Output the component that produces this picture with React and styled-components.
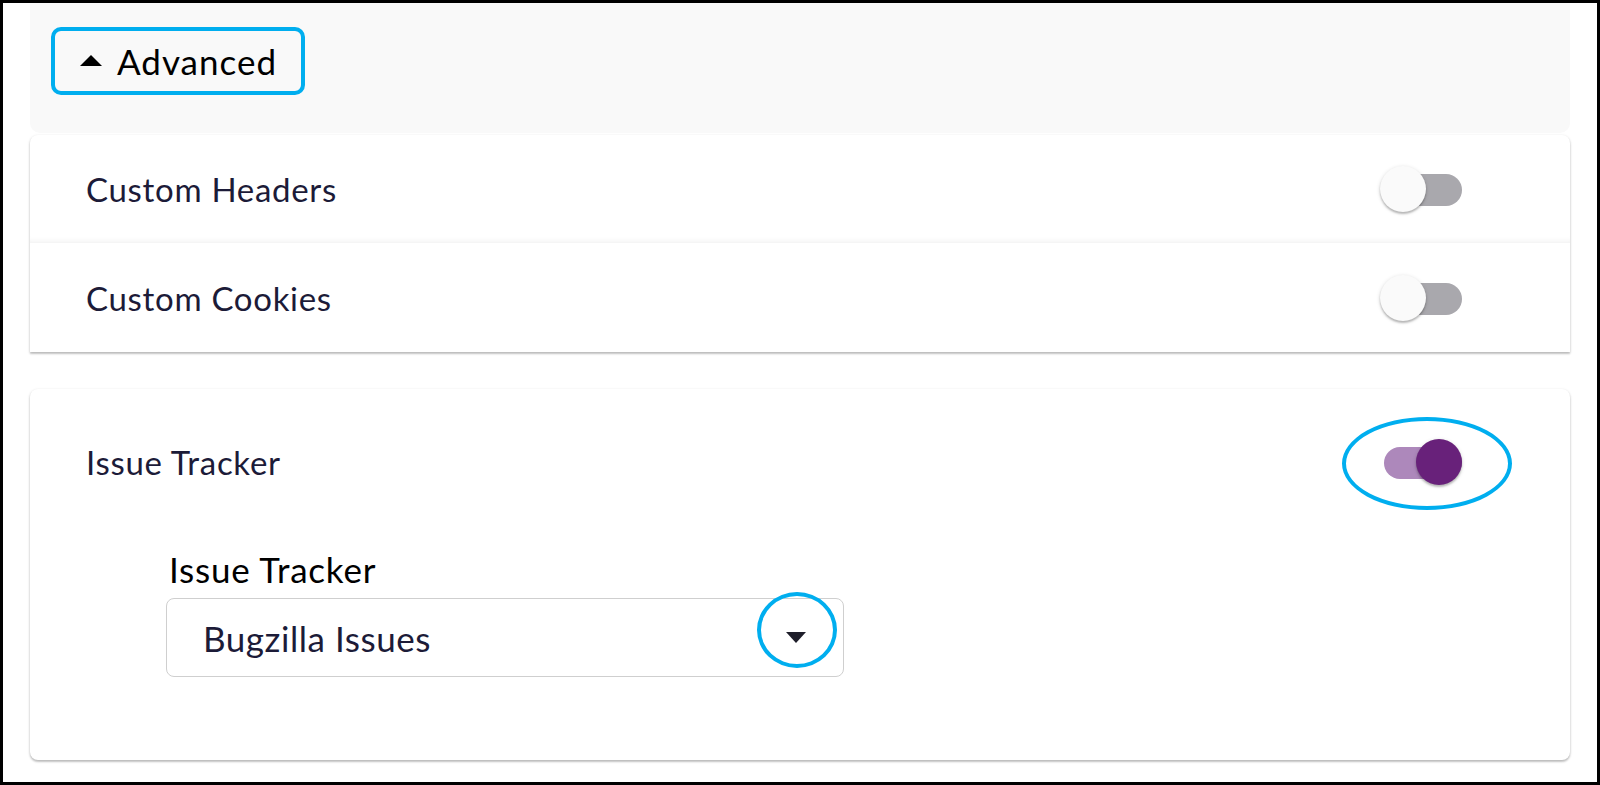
import React from 'react';
import styled, { createGlobalStyle } from 'styled-components';

const GlobalStyle = createGlobalStyle`
    body {
        margin: 0;
        background: #ffffff;
        font-family: Lato, "Noto Sans", sans-serif;
    }
`;

const Frame = styled.div`
    width: 1600px;
    height: 785px;
    box-sizing: border-box;
    border: 3px solid #000;
    background: #fff;
    overflow: hidden;
`;

const Column = styled.div`
    padding: 0 27px;
    display: flex;
    flex-direction: column;
`;

const Header = styled.div`
    height: 130px;
    box-sizing: border-box;
    padding: 24px 0 0 21px;
    background: #f9f9f9;
    border-radius: 0 0 10px 10px;
`;

const AdvancedButton = styled.button`
    display: inline-flex;
    align-items: center;
    gap: 15px;
    width: 254px;
    height: 68px;
    box-sizing: border-box;
    padding: 0 0 0 25px;
    border: 4px solid #00aeef;
    border-radius: 10px;
    background: transparent;
    font-family: inherit;
    font-size: 35px;
    letter-spacing: 1px;
    color: #000;
    cursor: pointer;
`;

const CaretUp = styled.span`
    width: 0;
    height: 0;
    border-left: 11px solid transparent;
    border-right: 11px solid transparent;
    border-bottom: 11px solid #000;
    margin-top: -2px;
`;

const Panel = styled.div`
    margin-top: ${p => p.$gap}px;
    background: #fff;
    border-radius: ${p => (p.$top ? '8px 8px 0 0' : '8px')};
    box-shadow: 0 1px 3px rgba(0, 0, 0, 0.18), 0 2px 2px rgba(0, 0, 0, 0.16);
    height: ${p => p.$height}px;
    box-sizing: border-box;
`;

const Row = styled.div`
    display: flex;
    align-items: center;
    justify-content: space-between;
    height: ${p => p.$height}px;
    padding: 0 108px 0 56px;
    box-shadow: ${p => (p.$divider ? 'inset 0 -7px 6px -6px rgba(0, 0, 0, 0.07)' : 'none')};
`;

const RowLabel = styled.span`
    font-size: 33px;
    letter-spacing: 0.7px;
    color: #1c1b38;
`;

const SwitchBox = styled.div`
    position: relative;
    width: 82px;
    height: 46px;
    flex-shrink: 0;
`;

const Track = styled.div`
    position: absolute;
    left: 4px;
    top: 8px;
    width: 78px;
    height: 32px;
    border-radius: 16px;
    background: ${p => (p.$on ? '#ad88bb' : '#a9a8ad')};
`;

const Thumb = styled.div`
    position: absolute;
    top: 0;
    left: ${p => (p.$on ? '36px' : '0')};
    width: 46px;
    height: 46px;
    border-radius: 50%;
    background: ${p => (p.$on ? '#68217a' : '#fafafa')};
    box-shadow: 0 2px 2px rgba(0, 0, 0, 0.22), 0 1px 4px rgba(0, 0, 0, 0.14);
`;

const Ring = styled.div`
    position: absolute;
    border: 4px solid #00aeef;
    border-radius: 50%;
    box-sizing: border-box;
    pointer-events: none;
`;

const SwitchRing = styled(Ring)`
    left: -38px;
    top: -22px;
    width: 170px;
    height: 93px;
`;

const Switch = ({ on, marked }) => (
    <SwitchBox>
        <Track $on={on} />
        <Thumb $on={on} />
        {marked && <SwitchRing />}
    </SwitchBox>
);

const Field = styled.div`
    padding: 14px 0 0 136px;
    display: flex;
    flex-direction: column;
    gap: 9px;
`;

const FieldLabel = styled.label`
    padding-left: 3px;
    font-size: 35px;
    letter-spacing: 0.8px;
    color: #000;
    line-height: 40px;
`;

const Select = styled.div`
    position: relative;
    display: flex;
    align-items: center;
    justify-content: space-between;
    width: 678px;
    height: 79px;
    box-sizing: border-box;
    padding: 0 37px 0 36px;
    border: 1px solid #cfcfcf;
    border-radius: 8px;
    font-size: 35px;
    letter-spacing: 0.55px;
    color: #1c1b38;
`;

const ArrowDown = styled.span`
    position: relative;
    width: 0;
    height: 0;
    border-left: 10.5px solid transparent;
    border-right: 10.5px solid transparent;
    border-top: 11px solid #1e1e2a;
`;

const ArrowRing = styled(Ring)`
    left: -39px;
    top: -51px;
    width: 80px;
    height: 76px;
`;

export default function App() {
    return (
        <>
            <GlobalStyle />
            <Frame>
                <Column>
                    <Header>
                        <AdvancedButton>
                            <CaretUp />
                            Advanced
                        </AdvancedButton>
                    </Header>
                    <Panel $gap={2} $top $height={217}>
                        <Row $height={108} $divider>
                            <RowLabel>Custom Headers</RowLabel>
                            <Switch />
                        </Row>
                        <Row $height={109}>
                            <RowLabel>Custom Cookies</RowLabel>
                            <Switch />
                        </Row>
                    </Panel>
                    <Panel $gap={37} $height={371}>
                        <Row $height={146}>
                            <RowLabel>Issue Tracker</RowLabel>
                            <Switch on marked />
                        </Row>
                        <Field>
                            <FieldLabel>Issue Tracker</FieldLabel>
                            <Select>
                                Bugzilla Issues
                                <ArrowDown>
                                    <ArrowRing />
                                </ArrowDown>
                            </Select>
                        </Field>
                    </Panel>
                </Column>
            </Frame>
        </>
    );
}
